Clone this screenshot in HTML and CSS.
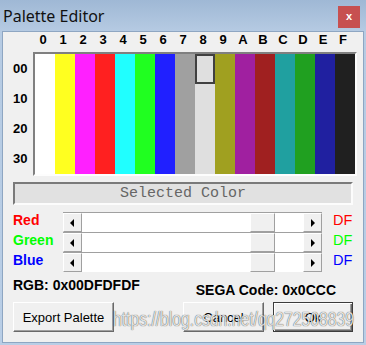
FILE: index.html
```html
<!DOCTYPE html>
<html lang="en">
  <head>
    <meta charset="UTF-8" />
    <meta name="viewport" content="width=device-width, initial-scale=1.0" />
    <title>Palette Editor</title>
    <link rel="stylesheet" href="styles.css">
  </head>
  <body>
    <div class="window">
      <div class="titlebar">
        <span class="title">Palette Editor</span>
        <span class="close">x</span>
      </div>

      <div class="client">
        <div class="col-heads">
          <span>0</span><span>1</span><span>2</span><span>3</span>
          <span>4</span><span>5</span><span>6</span><span>7</span>
          <span>8</span><span>9</span><span>A</span><span>B</span>
          <span>C</span><span>D</span><span>E</span><span>F</span>
        </div>

        <div class="palette-area">
          <div class="row-heads">
            <span>00</span><span>10</span><span>20</span><span>30</span>
          </div>
          <div class="palette">
            <div class="swatch" style="background:#ffffff"></div>
            <div class="swatch" style="background:#ffff20"></div>
            <div class="swatch" style="background:#ff20ff"></div>
            <div class="swatch" style="background:#ff2020"></div>
            <div class="swatch" style="background:#20ffff"></div>
            <div class="swatch" style="background:#20ff20"></div>
            <div class="swatch" style="background:#2020ff"></div>
            <div class="swatch" style="background:#a0a0a0"></div>
            <div class="swatch" style="background:#dfdfdf"><div class="selected"></div></div>
            <div class="swatch" style="background:#a0a020"></div>
            <div class="swatch" style="background:#a020a0"></div>
            <div class="swatch" style="background:#a02020"></div>
            <div class="swatch" style="background:#20a0a0"></div>
            <div class="swatch" style="background:#20a020"></div>
            <div class="swatch" style="background:#2020a0"></div>
            <div class="swatch" style="background:#202020"></div>
          </div>
        </div>

        <div class="selected-color">Selected Color</div>

        <div class="sliders">
          <span class="label red">Red</span>
          <div class="scrollbar">
            <span class="arrow left"></span>
            <div class="track"><span class="thumb" style="margin-left:168px"></span></div>
            <span class="arrow right"></span>
          </div>
          <span class="value red">DF</span>

          <span class="label green">Green</span>
          <div class="scrollbar">
            <span class="arrow left"></span>
            <div class="track"><span class="thumb" style="margin-left:168px"></span></div>
            <span class="arrow right"></span>
          </div>
          <span class="value green">DF</span>

          <span class="label blue">Blue</span>
          <div class="scrollbar">
            <span class="arrow left"></span>
            <div class="track"><span class="thumb" style="margin-left:168px"></span></div>
            <span class="arrow right"></span>
          </div>
          <span class="value blue">DF</span>
        </div>

        <div class="info">
          <span class="rgb">RGB: 0x00DFDFDF</span>
          <span class="sega">SEGA Code: 0x0CCC</span>
        </div>

        <div class="buttons">
          <button class="btn export">Export Palette</button>
          <button class="btn cancel">Cancel</button>
          <button class="btn ok">Ok</button>
        </div>

        <div class="watermark">https://blog.csdn.net/qq272508839</div>
      </div>
    </div>
  </body>
</html>
```

FILE: styles.css
```css
body {
  margin: 0;
  font-family: "Liberation Sans", Arial, sans-serif;
}

.window {
  width: 366px;
  height: 345px;
  box-sizing: border-box;
  padding: 0 3px 3px;
  display: flex;
  flex-direction: column;
  background: linear-gradient(#9fb8d5, #b6cbe3 32px, #b9cee6);
}

.titlebar {
  height: 32px;
  display: flex;
  align-items: flex-start;
}

.title {
  font-family: "Noto Sans", sans-serif;
  font-size: 16px;
  line-height: 22px;
  margin-top: 5px;
  color: #111;
}

.close {
  margin-left: auto;
  margin-right: 3px;
  margin-top: 6px;
  width: 22px;
  height: 22px;
  background: #c75050;
  color: #fff;
  font-size: 11px;
  font-weight: bold;
  line-height: 20px;
  text-align: center;
}

.client {
  flex: 1;
  position: relative;
  padding: 0 10px;
  background: #f0f0f0;
  box-shadow: 0 0 0 1px #8ea6c2;
}

.col-heads {
  display: grid;
  grid-template-columns: repeat(16, 20px);
  height: 20px;
  margin-left: 20px;
  font-size: 13px;
  font-weight: bold;
  line-height: 16px;
  text-align: center;
}

.palette-area {
  display: flex;
}

.row-heads {
  flex-shrink: 0;
  width: 20px;
  padding-top: 2px;
}

.row-heads span {
  display: block;
  height: 30px;
  line-height: 30px;
  font-size: 13px;
  font-weight: bold;
}

.palette {
  flex-shrink: 0;
  display: flex;
  border: 2px solid;
  border-color: #808080 #fdfdfd #fdfdfd #808080;
}

.swatch {
  width: 20px;
  height: 120px;
}

.selected {
  height: 30px;
  box-sizing: border-box;
  border: 2px solid #404040;
}

.selected-color {
  margin-top: 6px;
  height: 23px;
  box-sizing: border-box;
  border: 2px solid;
  border-color: #7a7a7a #fcfcfc #fcfcfc #7a7a7a;
  background: #e1e1e1;
  font-family: "Liberation Mono", monospace;
  font-size: 15px;
  line-height: 19px;
  color: #666;
  text-align: center;
}

.sliders {
  display: grid;
  grid-template-columns: 39px 259px auto;
  grid-auto-rows: 20px;
  column-gap: 11px;
  margin-top: 7px;
}

.label {
  font-size: 14px;
  font-weight: bold;
  line-height: 16px;
  white-space: nowrap;
}

.value {
  font-size: 14.5px;
  line-height: 16px;
}

.red { color: #ff0000; }
.green { color: #00ff00; }
.blue { color: #0000ff; }

.scrollbar {
  display: flex;
  border-top: 1px solid #a0a0a0;
}

.arrow {
  width: 19px;
  box-sizing: border-box;
  background: #f0f0f0;
  border: 1px solid;
  border-color: #fff #a0a0a0 #a0a0a0 #fff;
  display: flex;
  align-items: center;
  justify-content: center;
}

.arrow::before {
  content: "";
  border-top: 4px solid transparent;
  border-bottom: 4px solid transparent;
}

.arrow.left::before {
  border-right: 4px solid #000;
  margin-right: 2px;
}

.arrow.right::before {
  border-left: 4px solid #000;
  margin-left: 1px;
}

.track {
  flex: 1;
  display: flex;
  background: #fff;
}

.thumb {
  width: 25px;
  box-sizing: border-box;
  background: #f0f0f0;
  border: 1px solid;
  border-color: #fff #a0a0a0 #a0a0a0 #fff;
}

.info {
  display: flex;
  margin-top: 5px;
  font-size: 14px;
  font-weight: bold;
  line-height: 16px;
}

.sega {
  margin-left: auto;
  margin-right: 17px;
  padding-top: 5px;
}

.buttons {
  display: flex;
  margin-top: 4px;
}

.btn {
  height: 30px;
  padding: 0;
  font-family: "Liberation Sans", Arial, sans-serif;
  font-size: 13px;
  color: #000;
  background: #f0f0f0;
  border: 1px solid;
  border-color: #fff #696969 #696969 #fff;
  box-shadow: inset -1px -1px #a0a0a0;
}

.export {
  width: 101px;
}

.cancel {
  width: 81px;
  margin-left: auto;
}

.ok {
  width: 80px;
  margin-left: 9px;
  border-color: #3c3c3c;
  box-shadow: inset 1px 1px #fff, inset -1px -1px #696969, inset -2px -2px #a0a0a0;
}

.watermark {
  position: absolute;
  left: 110px;
  top: 277px;
  font-size: 20px;
  line-height: 20px;
  white-space: nowrap;
  color: rgba(255, 255, 255, 0.85);
  text-shadow: 0 0 1px rgba(0, 0, 0, 0.6), 0 0 1px rgba(0, 0, 0, 0.4);
  transform: scaleX(0.785);
  transform-origin: left top;
  pointer-events: none;
}
```
